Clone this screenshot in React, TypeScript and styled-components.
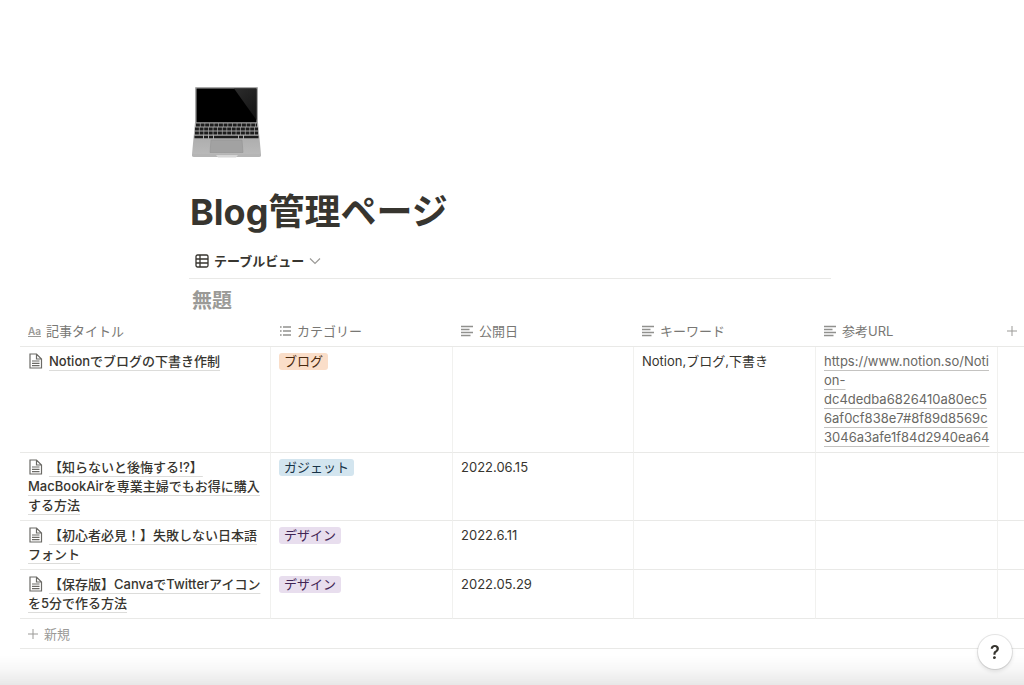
import React from "react";
import styled, { createGlobalStyle, css } from "styled-components";

const GlobalStyle = createGlobalStyle`
  * { box-sizing: border-box; }
  body {
    margin: 0;
    background: #fff;
    color: #37352f;
    font-family: Inter, "Noto Sans CJK JP", sans-serif;
    font-size: 13px;
    line-height: 19px;
  }
  button {
    font: inherit;
    color: inherit;
    background: none;
    border: 0;
    padding: 0;
    cursor: pointer;
  }
`;

const Page = styled.main`
  min-height: 100vh;
  padding-top: 84px;
  overflow-x: hidden;
`;

const PageHeader = styled.header`
  margin: 0 193px 0 189px;
`;

const PageIcon = styled.svg`
  display: block;
  width: 76px;
  height: 76px;
`;

const Title = styled.h1`
  margin: 28px 0 0 1px;
  font-size: 36px;
  line-height: 48px;
  font-weight: 700;
`;

const ViewBar = styled.nav`
  display: flex;
  margin-top: 8px;
  height: 35px;
  border-bottom: 1px solid #e9e9e7;
`;

const ViewButton = styled.button`
  display: flex;
  align-items: center;
  gap: 5px;
  padding-left: 6px;
  font-weight: 600;
`;

const DatabaseTitle = styled.h2`
  margin: 8px 0 0 3px;
  font-size: 20px;
  line-height: 28px;
  font-weight: 700;
  color: #9b9a97;
`;

const TableArea = styled.section`
  padding-left: 20px;
`;

const Table = styled.table`
  width: 100%;
  table-layout: fixed;
  border-collapse: separate;
  border-spacing: 0;
`;

const Column = styled.col<{ $size?: number }>`
  ${({ $size }) => $size && css`width: ${$size}px;`}
`;

const HeadCell = styled.th`
  height: 32px;
  padding: 1px 8px 0;
  border-bottom: 1px solid #e9e9e7;
  text-align: left;
  font-weight: 400;
  color: #787774;
`;

const HeadLabel = styled.div`
  display: flex;
  align-items: center;
  gap: 5px;
`;

const TextTypeIcon = styled.span`
  width: 13px;
  border-bottom: 1px solid #9b9a97;
  color: #9b9a97;
  font-size: 10px;
  line-height: 10px;
  font-weight: 600;
`;

const Cell = styled.td`
  padding: 5px 4px 5px 8px;
  border-bottom: 1px solid #e9e9e7;
  border-right: 1px solid #f1f1ef;
  vertical-align: top;
  overflow-wrap: anywhere;

  &:last-child {
    border-right: 0;
  }
`;

const DocIcon = styled.svg`
  width: 15px;
  height: 16px;
  margin-right: 6px;
  vertical-align: -3px;
`;

const TitleLink = styled.a`
  color: inherit;
  font-weight: 500;
  text-decoration: underline;
  text-decoration-color: #dcdcda;
  text-decoration-thickness: 1px;
  text-underline-offset: 4px;
  text-decoration-skip-ink: none;
`;

const UrlLink = styled.a`
  color: #696864;
  text-decoration: underline;
  text-decoration-color: #c4c3c1;
  text-decoration-thickness: 1px;
  text-underline-offset: 4px;
  text-decoration-skip-ink: none;
`;

type Tone = "orange" | "blue" | "purple";

const tones: Record<Tone, { back: string; text: string }> = {
  orange: { back: "#fadec9", text: "#49290e" },
  blue: { back: "#d3e5ef", text: "#183347" },
  purple: { back: "#e8deee", text: "#412454" },
};

const Tag = styled.span<{ $tone: Tone }>`
  display: block;
  width: fit-content;
  height: 17px;
  margin-top: 1px;
  padding: 0 5px;
  border-radius: 3px;
  line-height: 17px;
  background: ${({ $tone }) => tones[$tone].back};
  color: ${({ $tone }) => tones[$tone].text};
`;

const NewRowButton = styled.button`
  display: flex;
  align-items: center;
  gap: 5px;
  width: 100%;
  height: 30px;
  padding: 1px 0 0 7px;
  border-bottom: 1px solid #e9e9e7;
  color: #9b9a97;
`;

const BottomShade = styled.div`
  position: fixed;
  inset: auto 0 0 0;
  height: 30px;
  background: linear-gradient(rgba(0, 0, 0, 0), rgba(0, 0, 0, 0.03) 50%, rgba(0, 0, 0, 0.09));
  pointer-events: none;
`;

const HelpButton = styled.button`
  position: fixed;
  right: 12px;
  bottom: 16px;
  width: 34px;
  height: 34px;
  border-radius: 50%;
  background: #fff;
  box-shadow: 0 0 0 1px rgba(15, 15, 15, 0.1), 0 2px 4px rgba(15, 15, 15, 0.12);
  font-size: 18px;
  font-weight: 600;
`;

const keyRows = [
  { y: 40, left: 7, right: 69 },
  { y: 44, left: 6, right: 70 },
  { y: 48, left: 6, right: 70 },
];

const Laptop = () => (
  <PageIcon viewBox="0 0 76 76" aria-hidden="true">
    <defs>
      <linearGradient id="deck" x1="0" y1="0" x2="0" y2="1">
        <stop offset="0" stopColor="#a3a3a3" />
        <stop offset="1" stopColor="#b9b9b9" />
      </linearGradient>
      <linearGradient id="glare" x1="0" y1="0" x2="0.6" y2="1">
        <stop offset="0" stopColor="#2c2c2c" />
        <stop offset="1" stopColor="#161616" />
      </linearGradient>
    </defs>
    <rect x="6" y="3" width="63" height="37" rx="1" fill="#a9a9a9" />
    <rect x="7.5" y="4.5" width="60" height="34" fill="#000" />
    <path d="M45 4.5H67.500V36Z" fill="url(#glare)" />
    <path d="M6 38.500H69L72 70H3Z" fill="url(#deck)" />
    {keyRows.map((row) => (
      <line
        key={row.y}
        x1={row.left}
        x2={row.right - 1}
        y1={row.y + 1}
        y2={row.y + 1}
        stroke="#1d1d1d"
        strokeWidth="2.800"
        strokeDasharray="3.900 0.700"
      />
    ))}
    <path d="M5.500 53H14M15 53H19M20 53H24M25 53H49M50 53H54M55 53H69.500" stroke="#1d1d1d" strokeWidth="2.600" />
    <path d="M22 56H53L54 68.500H21Z" fill="#a2a2a2" stroke="#939393" strokeWidth="0.600" />
    <path d="M3 70H72V71.500Q72 73 70 73H5Q3 73 3 71.500Z" fill="#b5b5b5" />
    <path d="M27 71H49L47 73.500H29Z" fill="#d6d6d6" />
  </PageIcon>
);

const GridIcon = () => (
  <svg width="14" height="14" viewBox="0 0 14 14" fill="none" stroke="#37352f" strokeWidth="1.300" aria-hidden="true">
    <rect x="1" y="1" width="12" height="12" rx="1.500" />
    <path d="M1 5H13M1 9H13M5 1V13" />
  </svg>
);

const ChevronIcon = () => (
  <svg width="12" height="12" viewBox="0 0 12 12" fill="none" stroke="#9b9a97" strokeWidth="1.200" aria-hidden="true">
    <path d="M1 3.500L6 8.500L11 3.500" />
  </svg>
);

const ListIcon = () => (
  <svg width="13" height="12" viewBox="0 0 13 12" stroke="#91918e" strokeWidth="1.400" aria-hidden="true">
    <path d="M1 2H2.600M4 2H12M1 6H2.600M4 6H12M1 10H2.600M4 10H12" />
  </svg>
);

const LinesIcon = () => (
  <svg width="13" height="12" viewBox="0 0 13 12" stroke="#91918e" strokeWidth="1.400" aria-hidden="true">
    <path d="M0 1.500H12M0 4.500H8.500M0 7.500H12M0 10.500H9.500" />
  </svg>
);

const PlusIcon = () => (
  <svg width="12" height="12" viewBox="0 0 12 12" stroke="#9b9a97" strokeWidth="1" aria-hidden="true">
    <path d="M6 1V11M1 6H11" />
  </svg>
);

const PageGlyph = () => (
  <DocIcon viewBox="0 0 15 16" fill="none" stroke="#6b6a66" strokeWidth="1.200" aria-hidden="true">
    <path d="M2 1H8.500L13.500 6V15H2ZM8.500 1V6H13.500M4 8H11.500M4 10.300H11.500M4 12.600H11.500" />
  </DocIcon>
);

const columns = [
  { label: "記事タイトル", icon: <TextTypeIcon aria-hidden="true">Aa</TextTypeIcon>, size: 251 },
  { label: "カテゴリー", icon: <ListIcon />, size: 182 },
  { label: "公開日", icon: <LinesIcon />, size: 181 },
  { label: "キーワード", icon: <LinesIcon />, size: 182 },
  { label: "参考URL", icon: <LinesIcon />, size: 182 },
];

interface Article {
  title: string;
  category: string;
  tone: Tone;
  date?: string;
  keywords?: string;
  url?: string;
}

const articles: Article[] = [
  {
    title: "Notionでブログの下書き作制",
    category: "ブログ",
    tone: "orange",
    keywords: "Notion,ブログ,下書き",
    url: "https://www.notion.so/Notion-dc4dedba6826410a80ec56af0cf838e7#8f89d8569c3046a3afe1f84d2940ea64",
  },
  {
    title: "【知らないと後悔する!?】MacBookAirを専業主婦でもお得に購入する方法",
    category: "ガジェット",
    tone: "blue",
    date: "2022.06.15",
  },
  {
    title: "【初心者必見！】失敗しない日本語フォント",
    category: "デザイン",
    tone: "purple",
    date: "2022.6.11",
  },
  {
    title: "【保存版】CanvaでTwitterアイコンを5分で作る方法",
    category: "デザイン",
    tone: "purple",
    date: "2022.05.29",
  },
];

export default function App() {
  return (
    <Page lang="ja">
      <GlobalStyle />
      <PageHeader>
        <Laptop />
        <Title>Blog管理ページ</Title>
        <ViewBar>
          <ViewButton type="button">
            <GridIcon />
            テーブルビュー
            <ChevronIcon />
          </ViewButton>
        </ViewBar>
        <DatabaseTitle>無題</DatabaseTitle>
      </PageHeader>
      <TableArea>
        <Table>
          <colgroup>
            {columns.map((column) => (
              <Column key={column.label} $size={column.size} />
            ))}
            <Column />
          </colgroup>
          <thead>
            <tr>
              {columns.map((column) => (
                <HeadCell key={column.label} scope="col">
                  <HeadLabel>
                    {column.icon}
                    {column.label}
                  </HeadLabel>
                </HeadCell>
              ))}
              <HeadCell as="td">
                <HeadLabel as="button" type="button" aria-label="列を追加">
                  <PlusIcon />
                </HeadLabel>
              </HeadCell>
            </tr>
          </thead>
          <tbody>
            {articles.map((article) => (
              <tr key={article.title}>
                <Cell>
                  <PageGlyph />
                  <TitleLink href="#">{article.title}</TitleLink>
                </Cell>
                <Cell>
                  <Tag $tone={article.tone}>{article.category}</Tag>
                </Cell>
                <Cell>{article.date}</Cell>
                <Cell>{article.keywords}</Cell>
                <Cell>{article.url && <UrlLink href={article.url}>{article.url}</UrlLink>}</Cell>
                <Cell />
              </tr>
            ))}
          </tbody>
        </Table>
        <NewRowButton type="button">
          <PlusIcon />
          新規
        </NewRowButton>
      </TableArea>
      <BottomShade />
      <HelpButton type="button" aria-label="ヘルプ">?</HelpButton>
    </Page>
  );
}
